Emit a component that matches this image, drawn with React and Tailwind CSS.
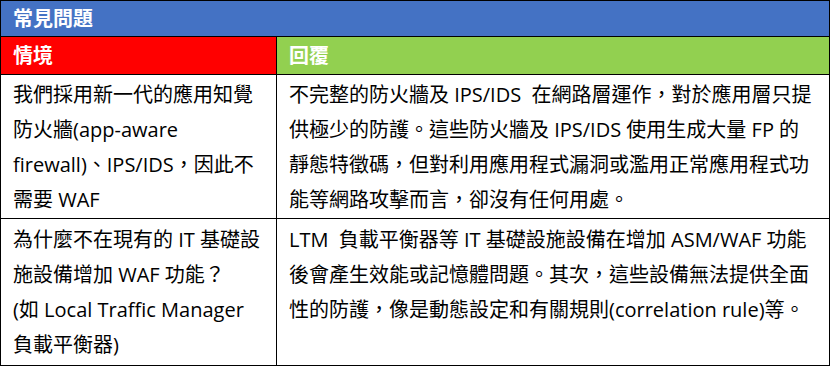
import React from "react";

function Lines({ lines }) {
  return (
    <>
      {lines.map((l, i) => (
        <div key={i} className="whitespace-pre">
          {l}
        </div>
      ))}
    </>
  );
}

export default function App() {
  return (
    <div className="bg-white w-[830px] h-[367px]">
      <div className="w-[830px] border border-black text-[20px] text-black font-['Open_Sans','Noto_Sans_CJK_TC',sans-serif]">
        <div className="h-[36px] bg-[#4472C4] border-b border-black pl-3 flex items-center text-white font-bold">
          常見問題
        </div>
        <div className="grid grid-cols-[276px_1fr] h-[38px] border-b border-black text-white font-bold">
          <div className="bg-[#FF0000] border-r border-black pl-3 flex items-center">
            情境
          </div>
          <div className="bg-[#92D050] pl-3 flex items-center">回覆</div>
        </div>
        <div className="grid grid-cols-[276px_1fr] h-[144px] border-b border-black leading-[35px]">
          <div className="border-r border-black pl-3 pt-[2px]">
            <Lines
              lines={[
                "我們採用新一代的應用知覺",
                "防火牆(app-aware",
                "firewall)、IPS/IDS，因此不",
                "需要 WAF",
              ]}
            />
          </div>
          <div className="pl-3 pt-[2px]">
            <Lines
              lines={[
                "不完整的防火牆及 IPS/IDS  在網路層運作，對於應用層只提",
                "供極少的防護。這些防火牆及 IPS/IDS 使用生成大量 FP 的",
                "靜態特徵碼，但對利用應用程式漏洞或濫用正常應用程式功",
                "能等網路攻擊而言，卻沒有任何用處。",
              ]}
            />
          </div>
        </div>
        <div className="grid grid-cols-[276px_1fr] h-[146px] leading-[35px]">
          <div className="border-r border-black pl-3 pt-[3px]">
            <Lines
              lines={[
                "為什麼不在現有的 IT 基礎設",
                "施設備增加 WAF 功能？",
                "(如 Local Traffic Manager",
                "負載平衡器)",
              ]}
            />
          </div>
          <div className="pl-3 pt-[3px]">
            <Lines
              lines={[
                "LTM  負載平衡器等 IT 基礎設施設備在增加 ASM/WAF 功能",
                "後會產生效能或記憶體問題。其次，這些設備無法提供全面",
                "性的防護，像是動態設定和有關規則(correlation rule)等。",
              ]}
            />
          </div>
        </div>
      </div>
    </div>
  );
}
